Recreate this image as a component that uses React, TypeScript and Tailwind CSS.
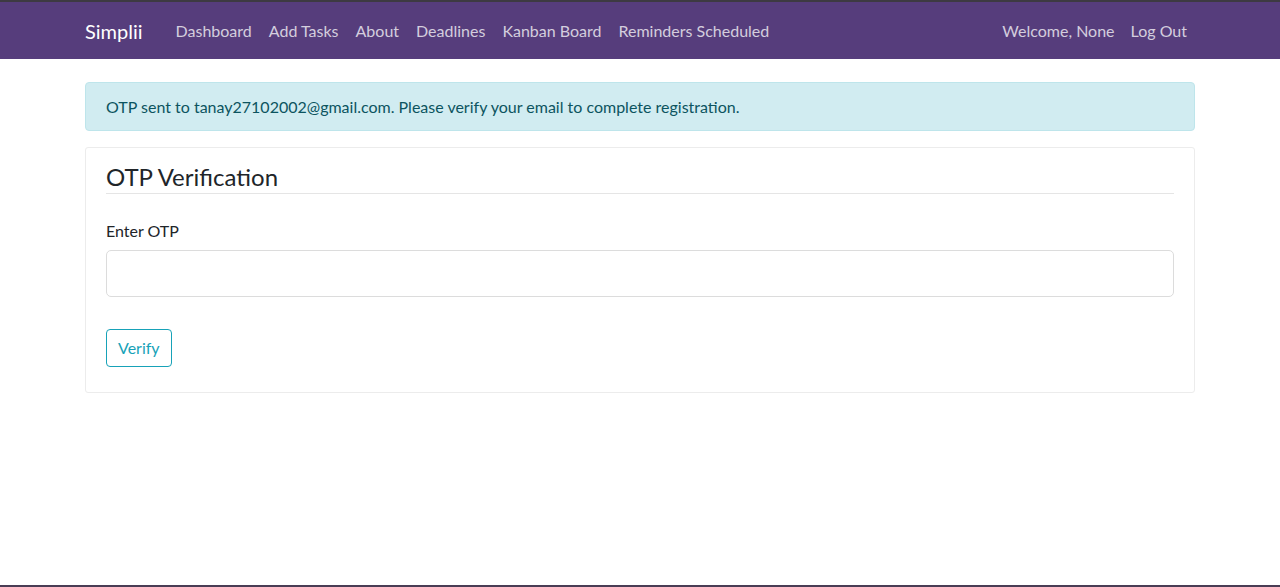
import React, { useState } from 'react';

const links = ['Dashboard', 'Add Tasks', 'About', 'Deadlines', 'Kanban Board', 'Reminders Scheduled'];

export default function App() {
  const [otp, setOtp] = useState('');

  return (
    <div className="min-h-[587px] bg-white text-[#212529] flex flex-col" style={{ fontFamily: '"Segoe UI", Lato, "Noto Sans", sans-serif' }}>
      {/* Navbar */}
      <nav className="h-[59px] bg-[#563d7c] border-t-2 border-[#3d3a42] flex items-center">
        <div className="w-[1110px] mx-auto flex items-center justify-between">
          <div className="flex items-center">
            <span className="text-[20px] text-white mr-[33px]">Simplii</span>
            <div className="flex items-center gap-[17px] text-[16px] text-white/75">
              {links.map((l) => (
                <a key={l} href="#">{l}</a>
              ))}
            </div>
          </div>
          <div className="flex items-center gap-[16px] text-[16px] text-white/75 mr-[8px]">
            <span>Welcome, None</span>
            <a href="#">Log Out</a>
          </div>
        </div>
      </nav>

      <main className="flex-1 w-[1110px] mx-auto pt-[23px]">
        {/* Alert */}
        <div className="h-[49px] bg-[#d1ecf1] border border-[#bee5eb] rounded-[4px] px-[20px] flex items-center text-[16px] text-[#0c5460]">
          OTP sent to tanay27102002@gmail.com. Please verify your email to complete registration.
        </div>

        {/* Card */}
        <div className="mt-[16px] border border-[#ececec] rounded-[3px] px-[20px] pt-[14px] pb-[25px]">
          <h3 className="text-[24px] leading-[30px] pb-[1px] border-b border-[#e5e5e5]">OTP Verification</h3>
          <div className="mt-[25px]">
            <label className="block text-[16px] mb-[7px]">Enter OTP</label>
            <input
              value={otp}
              onChange={(e) => setOtp(e.target.value)}
              className="w-full h-[47px] border border-[#dcdcdc] rounded-[5px] px-[12px] outline-none"
            />
          </div>
          <button className="mt-[32px] h-[38px] px-[11px] border border-[#17a2b8] rounded-[4px] text-[16px] text-[#17a2b8]">
            Verify
          </button>
        </div>
      </main>
      <div className="h-[2px] bg-[#4a3d55]" />
    </div>
  );
}
